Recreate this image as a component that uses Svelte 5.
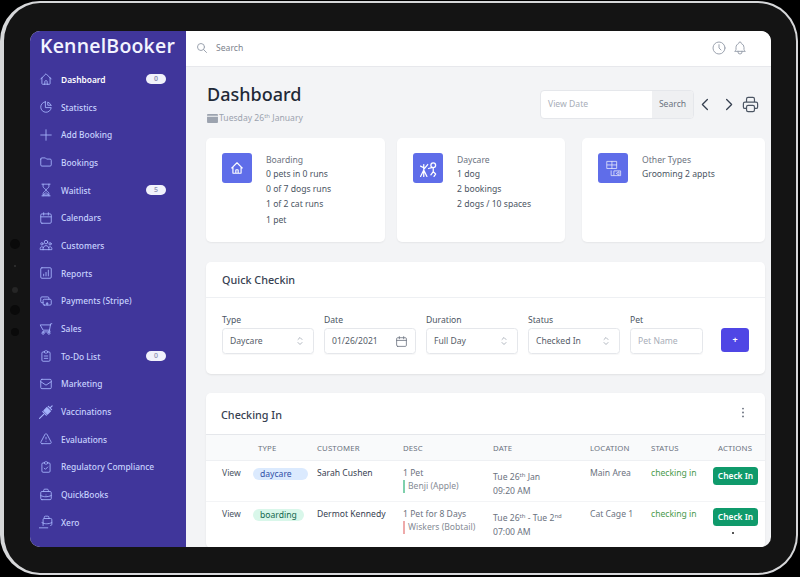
<script>
  const icons = {
    home: 'M3 12l2-2m0 0l7-7 7 7M5 10v10a1 1 0 001 1h3m10-11l2 2m-2-2v10a1 1 0 01-1 1h-3m-6 0a1 1 0 001-1v-4a1 1 0 011-1h2a1 1 0 011 1v4a1 1 0 001 1m-6 0h6',
    pie: 'M11 3.055A9.001 9.001 0 1020.945 13H11V3.055zM20.488 9H15V3.512A9.025 9.025 0 0120.488 9z',
    plus: 'M12 3v18m9-9H3',
    folder: 'M3 7v10a2 2 0 002 2h14a2 2 0 002-2V9a2 2 0 00-2-2h-6l-2-2H5a2 2 0 00-2 2z',
    hourglass: 'M5 2h14M5 22h14M7 2v4c0 3 5 4 5 6s-5 3-5 6v4M17 2v4c0 3-5 4-5 6s5 3 5 6v4M8 20c1-2 3-3 4-3s3 1 4 3z',
    calendar: 'M8 7V3m8 4V3m-13 7h18M5 21h14a2 2 0 002-2V7a2 2 0 00-2-2H5a2 2 0 00-2 2v12a2 2 0 002 2z',
    group: 'M17 20h5v-2a3 3 0 00-5.356-1.857M17 20H7m10 0v-2c0-.656-.126-1.283-.356-1.857M7 20H2v-2a3 3 0 015.356-1.857M7 20v-2c0-.656.126-1.283.356-1.857m0 0a5.002 5.002 0 019.288 0M15 7a3 3 0 11-6 0 3 3 0 016 0zm6 3a2 2 0 11-4 0 2 2 0 014 0zM7 10a2 2 0 11-4 0 2 2 0 014 0z',
    report: 'M5 3h14a2 2 0 012 2v14a2 2 0 01-2 2H5a2 2 0 01-2-2V5a2 2 0 012-2zM8 17v-3m4 3V11m4 6V7',
    cash: 'M17 9V7a2 2 0 00-2-2H5a2 2 0 00-2 2v6a2 2 0 002 2h2m2 4h10a2 2 0 002-2v-6a2 2 0 00-2-2H9a2 2 0 00-2 2v6a2 2 0 002 2zm5-3.500a1.500 1.500 0 11-.01 0z',
    cart: 'M22 3h-2l-.4 2M18 14H7L2 5h17.600M18 14l1.600-9M18 14l1 3H7m0 0a2 2 0 100 4 2 2 0 000-4zm10 0a2 2 0 100 4 2 2 0 000-4z',
    clip: 'M9 5H7a2 2 0 00-2 2v12a2 2 0 002 2h10a2 2 0 002-2V7a2 2 0 00-2-2h-2M9 5a2 2 0 002 2h2a2 2 0 002-2M9 5a2 2 0 012-2h2a2 2 0 012 2M9 12h6M9 16h6',
    mail: 'M5 4h14a2 2 0 012 2v12a2 2 0 01-2 2H5a2 2 0 01-2-2V6a2 2 0 012-2zM3 8l9 6 9-6',
    syringe: 'M1 23l7-7M6.500 11.500l6 6M8.500 9.500l6 6 5-5-6-6zM16 2.500l5.500 5.500M19 5l3.500-3.500',
    warn: 'M12 9v3m0 4h.01m-6.938 4h13.856c1.54 0 2.502-1.667 1.732-3L13.732 4c-.77-1.333-2.694-1.333-3.464 0L3.34 17c-.77 1.333.192 3 1.732 3z',
    check: 'M9 5H7a2 2 0 00-2 2v12a2 2 0 002 2h10a2 2 0 002-2V7a2 2 0 00-2-2h-2M9 5a2 2 0 002 2h2a2 2 0 002-2M9 5a2 2 0 012-2h2a2 2 0 012 2M9 14l2 2 4-4',
    case: 'M21 13A23.931 23.931 0 0112 15c-3.183 0-6.220-.620-9-2M16 6V4a2 2 0 00-2-2h-4a2 2 0 00-2 2v2m4 6h.01M5 20h14a2 2 0 002-2V8a2 2 0 00-2-2H5a2 2 0 00-2 2v10a2 2 0 002 2z',
    xero: 'M22 13c-3 1.500-6 2-9 2s-5-.500-8-2M17 6V4a2 2 0 00-2-2h-4a2 2 0 00-2 2v2M7 18V8a2 2 0 012-2h11a2 2 0 012 2v8a2 2 0 01-2 2M0 22h15',
    search: 'M21 21l-6-6m2-5a7 7 0 11-14 0 7 7 0 0114 0z',
    clock: 'M12 7v5l3 3m6-3a9 9 0 11-18 0 9 9 0 0118 0z',
    bell: 'M15 17h5l-1.405-1.405A2.032 2.032 0 0118 14.158V11a6.002 6.002 0 00-4-5.659V5a2 2 0 10-4 0v.341C7.670 6.165 6 8.388 6 11v3.159c0 .538-.214 1.055-.595 1.436L4 17h5m6 0v1a3 3 0 11-6 0v-1m6 0H9',
    printer: 'M17 17h2a2 2 0 002-2v-4a2 2 0 00-2-2H5a2 2 0 00-2 2v4a2 2 0 002 2h2m2 4h6a2 2 0 002-2v-4a2 2 0 00-2-2H9a2 2 0 00-2 2v4a2 2 0 002 2zm8-12V5a2 2 0 00-2-2H9a2 2 0 00-2 2v4h10z',
    selector: 'M8 9l4-4 4 4m0 6l-4 4-4-4',
    left: 'M15 4l-8 8 8 8',
    right: 'M9 4l8 8-8 8',
    kennel: 'M6 7v15M6 13l5-6M6 14l-4 8M6 14l4 8M2 9l4 2M15 8a3 3 0 106 0 3 3 0 00-6 0zM16 11l-4 1M18 11v5l3 3-2 3M15 20l3-4',
    grid: 'M4 3h12v9H4zM4 7.500h12M10 3v9M9 15v6h3M13 15h8v6h-8zM16 18l3-2v4z'
  };
  const nav = [
    ['home', 'Dashboard', '0'], ['pie', 'Statistics'], ['plus', 'Add Booking'], ['folder', 'Bookings'],
    ['hourglass', 'Waitlist', '5'], ['calendar', 'Calendars'], ['group', 'Customers'], ['report', 'Reports'],
    ['cash', 'Payments (Stripe)'], ['cart', 'Sales'], ['clip', 'To-Do List', '0'], ['mail', 'Marketing'],
    ['syringe', 'Vaccinations'], ['warn', 'Evaluations'], ['check', 'Regulatory Compliance'], ['case', 'QuickBooks'], ['xero', 'Xero']
  ];
  const fields = [
    ['Type', 'Daycare', 'selector'], ['Date', '01/26/2021', 'calendar'], ['Duration', 'Full Day', 'selector'], ['Status', 'Checked In', 'selector']
  ];
</script>

{#snippet ic(name, cls)}
  <svg class={cls} viewBox="0 0 24 24" fill="none" stroke="currentColor" stroke-linecap="round" stroke-linejoin="round"><path d={icons[name]} /></svg>
{/snippet}

<div class="page">
  <div class="device">
    <div class="sensors"><i></i><i class="tiny"></i><i class="small"></i><i></i><i class="small"></i></div>
    <div class="screen">
      <aside class="sidebar">
        <div class="logo">KennelBooker</div>
        <nav>
          {#each nav as [icon, label, badge], i}
            <div class="item" class:active={i === 0}>
              {@render ic(icon, 'navicon ' + icon)}
              <span class="label">{label}</span>
              {#if badge}<span class="pill">{badge}</span>{/if}
            </div>
          {/each}
        </nav>
      </aside>
      <div class="body">
        <header class="topbar">
          {@render ic('search', 'searchicon')}
          <span class="searchtext">Search</span>
          <span class="spacer"></span>
          {@render ic('clock', 'topicon')}
          {@render ic('bell', 'topicon')}
        </header>
        <main>
          <div class="pagehead">
            <div>
              <h1>Dashboard</h1>
              <div class="subdate">
                <svg class="calsolid" viewBox="0 0 12 11"><path d="M1 1h10a1 1 0 011 1v1H0V2a1 1 0 011-1zM0 4h12v6a1 1 0 01-1 1H1a1 1 0 01-1-1z" fill="#9ca3af" /></svg>
                <span>Tuesday 26<sup>th</sup> January</span>
              </div>
            </div>
            <div class="tools">
              <div class="datebox"><span class="viewdate">View Date</span><span class="searchbtn">Search</span></div>
              {@render ic('left', 'chev')}
              {@render ic('right', 'chev')}
              {@render ic('printer', 'print')}
            </div>
          </div>

          <section class="cards">
            <div class="card c1">
              <div class="tile">{@render ic('home', 'tileicon')}</div>
              <div class="lines"><div class="muted">Boarding</div><div>0 pets in 0 runs</div><div>0 of 7 dogs runs</div><div>1 of 2 cat runs</div><div>1 pet</div></div>
            </div>
            <div class="card c2">
              <div class="tile">{@render ic('kennel', 'tileicon big')}</div>
              <div class="lines"><div class="muted">Daycare</div><div>1 dog</div><div>2 bookings</div><div>2 dogs / 10 spaces</div></div>
            </div>
            <div class="card c3">
              <div class="tile">{@render ic('grid', 'tileicon big thin')}</div>
              <div class="lines"><div class="muted">Other Types</div><div>Grooming 2 appts</div></div>
            </div>
          </section>

          <section class="panel quick">
            <h2 class="phead">Quick Checkin</h2>
            <div class="form">
              {#each fields as [label, value, icon]}
                <div class="field">
                  <div class="flabel">{label}</div>
                  <div class="control"><span>{value}</span>{@render ic(icon, icon === 'selector' ? 'sel' : 'cal')}</div>
                </div>
              {/each}
              <div class="field pet">
                <div class="flabel">Pet</div>
                <div class="control"><span class="ph">Pet Name</span></div>
              </div>
              <div class="addbtn">+</div>
            </div>
          </section>

          <section class="panel list">
            <div class="phead listhead">
              <h2>Checking In</h2>
              <svg class="dots" viewBox="0 0 4 14"><circle cx="2" cy="2" r="1.200" /><circle cx="2" cy="7" r="1.200" /><circle cx="2" cy="12" r="1.200" /></svg>
            </div>
            <table>
              <colgroup><col style="width:47px" /><col style="width:64px" /><col style="width:86px" /><col style="width:90px" /><col style="width:97px" /><col style="width:61px" /><col style="width:62px" /><col /></colgroup>
              <thead>
                <tr><th></th><th class="indent">TYPE</th><th>CUSTOMER</th><th>DESC</th><th>DATE</th><th>LOCATION</th><th>STATUS</th><th class="acts">ACTIONS</th></tr>
              </thead>
              <tbody>
                <tr>
                  <td class="view">View</td>
                  <td><span class="tag blue">daycare</span></td>
                  <td class="cust">Sarah Cushen</td>
                  <td class="desc"><div>1 Pet</div><div class="pet-line green">Benji (Apple)</div></td>
                  <td class="when"><div>Tue 26<sup>th</sup> Jan</div><div>09:20 AM</div></td>
                  <td class="desc">Main Area</td>
                  <td class="status">checking in</td>
                  <td class="actcell"><span class="cta">Check In</span></td>
                </tr>
                <tr class="last">
                  <td class="view">View</td>
                  <td><span class="tag mint">boarding</span></td>
                  <td class="cust">Dermot Kennedy</td>
                  <td class="desc"><div>1 Pet for 8 Days</div><div class="pet-line red">Wiskers (Bobtail)</div></td>
                  <td class="when"><div>Tue 26<sup>th</sup> - Tue 2<sup>nd</sup></div><div>07:00 AM</div></td>
                  <td class="desc">Cat Cage 1</td>
                  <td class="status">checking in</td>
                  <td class="actcell"><span class="cta">Check In</span><span class="speck"></span></td>
                </tr>
              </tbody>
            </table>
          </section>
        </main>
      </div>
    </div>
  </div>
</div>

<style>
  :global(body) { margin: 0; background: #000; }
  .page { width: 800px; height: 577px; overflow: hidden; background: #000; font-family: "Noto Sans", "Open Sans", sans-serif; color: #374151; box-sizing: border-box; padding: 1px 2px 2px 0; }
  .device { position: relative; height: 100%; box-sizing: border-box; border: 2px solid #d6d7d9; border-left-width: 4px; border-radius: 40px; background: #141414; padding: 28px 25px 26px 26px; }
  .sensors { position: absolute; left: 6px; top: 236px; width: 10px; }
  .sensors i { position: absolute; left: 0; width: 10px; height: 10px; border-radius: 50%; background: #0a0a0a; }
  .sensors i:nth-child(1) { top: 0; }
  .sensors i:nth-child(2) { top: 26px; left: 4px; width: 2px; height: 2px; background: #333; }
  .sensors i:nth-child(3) { top: 48px; left: 2px; width: 6px; height: 6px; background: #262626; }
  .sensors i:nth-child(4) { top: 66px; }
  .sensors i:nth-child(5) { top: 89px; left: 1px; width: 8px; height: 8px; }
  .screen { display: flex; height: 100%; border-radius: 10px; overflow: hidden; background: #f3f4f6; }

  .sidebar { width: 156px; flex: none; background: #40369b; box-sizing: border-box; }
  .logo { color: #f3f4ff; font: 600 19.500px/1 "Open Sans", sans-serif; letter-spacing: .2px; padding: 5px 0 0 10px; height: 34.500px; box-sizing: border-box; }
  .item { display: flex; align-items: center; height: 27.700px; padding: 0 20px 0 9px; color: #c7d2fe; font-size: 8.400px; font-weight: 500; }
  .item.active { color: #fff; font-weight: 600; }
  :global(.navicon) { width: 14px; height: 14px; stroke-width: 1.5; color: #a5b4fc; flex: none; margin-right: 8px; }
  :global(.navicon.syringe) { fill: currentColor; stroke-width: 2; }
  .label { flex: 1; white-space: nowrap; }
  .pill { width: 20px; height: 10px; border-radius: 5px; background: #f1f2fb; color: #8a8db0; font-size: 7px; line-height: 10px; text-align: center; }

  .body { flex: 1; min-width: 0; display: flex; flex-direction: column; }
  .topbar { height: 36px; flex: none; box-sizing: border-box; background: #fff; border-bottom: 1px solid #e7e8ec; display: flex; align-items: center; padding: 0 23px 2px 10px; }
  :global(.searchicon) { width: 12px; height: 12px; color: #9ca3af; stroke-width: 2; margin-right: 8px; }
  .searchtext { font-size: 8.600px; color: #7d838d; }
  .spacer { flex: 1; }
  :global(.topicon) { width: 16px; height: 16px; color: #9ca3af; stroke-width: 1.5; margin-left: 5px; }

  main { flex: 1; min-height: 0; padding: 0 6px 0 20px; overflow: hidden; }
  .pagehead { display: flex; justify-content: space-between; height: 71px; }
  h1 { margin: 14px 0 0 1px; font-size: 18px; line-height: 26px; font-weight: 500; color: #1f2937; }
  .subdate { display: flex; align-items: center; gap: 1px; margin: 5px 0 0 1px; font-size: 8.600px; color: #9ca3af; line-height: 12px; }
  .calsolid { width: 11px; height: 10px; }
  sup { font-size: 70%; line-height: 0; vertical-align: baseline; position: relative; top: -.45em; }
  .tools { display: flex; align-items: center; height: 29px; margin-top: 23px; }
  .datebox { display: flex; width: 154px; height: 29px; box-sizing: border-box; border: 1px solid #e5e7eb; border-radius: 4px; background: #fff; overflow: hidden; font-size: 8.600px; line-height: 27px; }
  .viewdate { flex: 1; padding-left: 7px; color: #a8aeb8; }
  .searchbtn { width: 41px; text-align: center; background: #eff0f2; color: #6b7280; }
  :global(.chev) { width: 15px; height: 15px; color: #374151; stroke-width: 2; margin-left: 4px; }
  :global(.chev + .chev) { margin-left: 8px; }
  :global(.print) { width: 19px; height: 19px; color: #4b5563; stroke-width: 1.5; margin-left: 5px; margin-right: 5px; }

  .cards { display: flex; height: 104px; }
  .card { background: #fff; border-radius: 5px; box-shadow: 0 1px 2px rgba(0,0,0,.06); display: flex; padding: 15px 16px; box-sizing: border-box; }
  .c1 { width: 179px; }
  .c2 { width: 168px; margin-left: 12px; }
  .c3 { width: 183px; margin-left: 17px; }
  .tile { width: 30px; height: 30px; background: #5f6de9; border-radius: 3px; flex: none; display: flex; align-items: center; justify-content: center; margin-right: 14px; }
  :global(.tileicon) { width: 14px; height: 14px; color: #fff; stroke-width: 2; }
  :global(.tileicon.big) { width: 19px; height: 19px; stroke-width: 1.6; }
  :global(.tileicon.thin) { stroke-width: 1; opacity: .85; }
  .lines { font-size: 8.600px; line-height: 15.200px; color: #4b5563; white-space: nowrap; }
  .muted { color: #6b7280; line-height: 14px; }

  .panel { background: #fff; border-radius: 5px; box-shadow: 0 1px 2px rgba(0,0,0,.08); width: 559px; margin-top: 20px; }
  .quick { height: 112px; }
  .phead { margin: 0; height: 36px; box-sizing: border-box; border-bottom: 1px solid #eef0f3; padding-left: 16px; font-size: 10.800px; font-weight: 500; line-height: 35px; color: #374151; }
  .form { display: flex; padding: 16px 0 0 16px; align-items: flex-start; }
  .field { width: 92px; margin-right: 10px; }
  .field.pet { width: 73px; margin-right: 18px; }
  .flabel { font-size: 8.600px; line-height: 12px; color: #4b5563; margin-bottom: 2px; }
  .control { height: 26px; box-sizing: border-box; border: 1px solid #e5e7eb; border-radius: 3.500px; display: flex; align-items: center; justify-content: space-between; padding: 0 7px; font-size: 8.600px; color: #555c68; box-shadow: 0 1px 1px rgba(0,0,0,.03); }
  .ph { color: #a8aeb8; }
  :global(.sel) { width: 12px; height: 12px; color: #9ca3af; stroke-width: 1.6; }
  :global(.cal) { width: 13px; height: 13px; color: #6b7280; stroke-width: 1.5; }
  .addbtn { width: 28px; height: 24px; margin-top: 14px; border-radius: 3.500px; background: #4f46e5; color: #fff; font-size: 9px; font-weight: 700; line-height: 24px; text-align: center; }

  .list { margin-top: 19px; }
  .listhead { height: 42px; line-height: 44px; display: flex; justify-content: space-between; padding-left: 15px; padding-right: 20px; border-bottom: 1px solid #e5e7eb; }
  h2 { margin: 0; font: inherit; }
  .dots { width: 4px; height: 11px; fill: #6b7280; margin-top: 14px; }
  table { width: 559px; table-layout: fixed; border-collapse: collapse; font-size: 8.600px; }
  th { height: 25px; background: #f9fafb; border-bottom: 1px solid #eef0f3; font-size: 7.800px; font-weight: 400; letter-spacing: .15px; color: #6b7280; text-align: left; padding: 0; }
  th.indent { padding-left: 5px; }
  th.acts { padding-left: 5px; }
  td { padding: 6px 0 0; vertical-align: top; color: #4b5563; white-space: nowrap; line-height: 12px; }
  tbody tr { height: 41px; border-bottom: 1px solid #f3f4f6; }
  tbody tr.last { height: 46px; border-bottom: 0; }
  .view { padding-left: 16px; }
  .cust { color: #374151; }
  .desc { color: #6b7280; }
  .desc div { line-height: 13px; }
  .tag { display: inline-block; height: 12px; line-height: 12px; border-radius: 6px; padding: 0 7px; margin-top: 1px; }
  .blue { background: #dbeafe; color: #3251a8; width: 41px; }
  .mint { background: #d9f7ea; color: #14684d; }
  .pet-line { border-left: 2px solid; padding-left: 3px; color: #858b95; }
  .green { border-color: #7fd0ac; }
  .red { border-color: #eeaaaa; }
  .when { padding-top: 9px; color: #6b7280; }
  .when div { line-height: 14px; }
  .status { color: #4a9a4c; }
  .cta { display: block; width: 45px; height: 18px; border-radius: 3.500px; background: #0f9a6b; color: #fff; font-size: 8.400px; font-weight: 600; line-height: 18px; text-align: center; }
  .speck { display: block; width: 1.500px; height: 1.500px; margin: 6px 0 0 19px; background: #555; }
</style>
